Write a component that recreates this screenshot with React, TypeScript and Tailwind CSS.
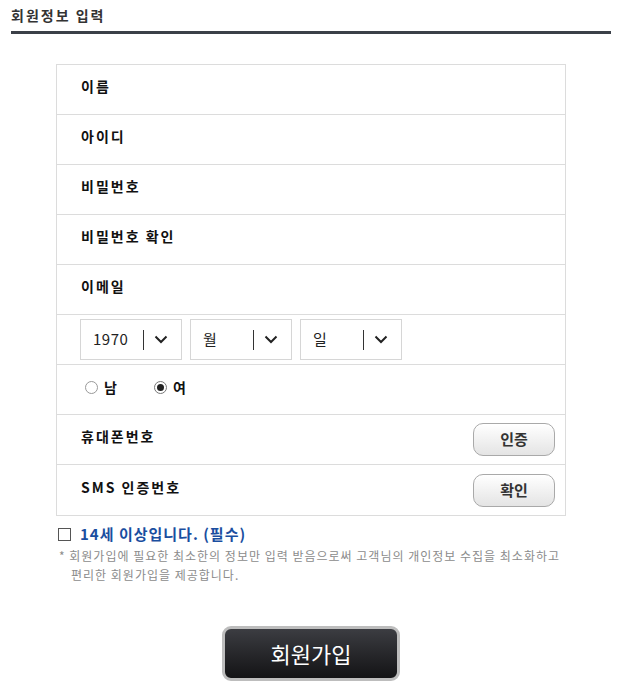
import React from 'react'

const font = { fontFamily: '"Noto Sans CJK KR", "Noto Sans", sans-serif' }

function Row({ children, last }: { children: React.ReactNode; last?: boolean }) {
  return (
    <div className={`h-[50px] flex items-center ${last ? '' : 'border-b border-[#dcdcdc]'}`}>
      {children}
    </div>
  )
}

function Label({ text }: { text: string }) {
  return <span className="pl-6 pb-[6px] text-[14px] font-bold text-[#111] tracking-[2px]">{text}</span>
}

function Chevron() {
  return (
    <svg width="14" height="9" viewBox="0 0 14 9" fill="none">
      <path d="M1.5 1.5 L7 7 L12.5 1.5" stroke="#222" strokeWidth="2" />
    </svg>
  )
}

function DateSelect({ value }: { value: string }) {
  return (
    <div className="w-[102px] h-[41px] border border-[#d6d6d6] flex items-center">
      <span className="w-[62px] pl-3 text-[15px] text-[#222] tracking-[0.5px]">{value}</span>
      <span className="w-px h-[20px] bg-[#333]" />
      <span className="flex-1 flex justify-center pr-1">
        <Chevron />
      </span>
    </div>
  )
}

function SmallButton({ text }: { text: string }) {
  return (
    <button className="mr-[10px] w-[82px] h-[33px] rounded-[10px] border border-[#a9a9a9] bg-gradient-to-b from-white to-[#e4e4e4] text-[15px] font-bold text-[#333] shadow-[inset_0_1px_0_#fff]">
      {text}
    </button>
  )
}

export default function App() {
  return (
    <div className="bg-white min-h-[694px] pl-[11px] pt-[5px]" style={font}>
      <div className="w-[600px]">
        <h2 className="text-[14px] font-bold text-[#333] leading-[20px] tracking-[2px]">회원정보 입력</h2>
        <div className="mt-[6px] h-[3px] bg-[#3b4048]" />

        <div className="mt-[30px] mx-auto w-[510px] border border-[#dcdcdc]">
          <Row><Label text="이름" /></Row>
          <Row><Label text="아이디" /></Row>
          <Row><Label text="비밀번호" /></Row>
          <Row><Label text="비밀번호 확인" /></Row>
          <Row><Label text="이메일" /></Row>
          <Row>
            <div className="pl-[23px] flex gap-2">
              <DateSelect value="1970" />
              <DateSelect value="월" />
              <DateSelect value="일" />
            </div>
          </Row>
          <Row>
            <div className="pl-[28px] pb-[5px] flex items-center text-[14px] font-bold text-[#111]">
              <span className="w-[13px] h-[13px] rounded-full border border-[#999] bg-white" />
              <span className="ml-[6px]">남</span>
              <span className="ml-[37px] w-[13px] h-[13px] rounded-full border border-[#777] bg-white flex items-center justify-center">
                <span className="w-[7px] h-[7px] rounded-full bg-[#222]" />
              </span>
              <span className="ml-[6px]">여</span>
            </div>
          </Row>
          <Row>
            <div className="w-full flex items-center justify-between">
              <Label text="휴대폰번호" />
              <SmallButton text="인증" />
            </div>
          </Row>
          <Row last>
            <div className="w-full flex items-center justify-between">
              <Label text="SMS 인증번호" />
              <SmallButton text="확인" />
            </div>
          </Row>
        </div>

        <div className="ml-[47px] mt-[7px] flex items-center">
          <span className="w-[13px] h-[13px] border border-[#555] bg-white" />
          <span className="ml-[9px] text-[15px] font-bold text-[#1a4ea0] tracking-[1px]">14세 이상입니다. (필수)</span>
        </div>
        <div className="ml-[48px] text-[12px] leading-[19px] text-[#8c8c8c] tracking-[1px]">
          <p>* 회원가입에 필요한 최소한의 정보만 입력 받음으로써 고객님의 개인정보 수집을 최소화하고</p>
          <p className="pl-3">편리한 회원가입을 제공합니다.</p>
        </div>

        <div className="mt-[42px] flex justify-center">
          <button className="w-[178px] h-[55px] rounded-[9px] border-[3px] border-[#bdbdbd] bg-gradient-to-b from-[#3c3d42] to-[#141416] text-white text-[22px]">
            회원가입
          </button>
        </div>
      </div>
    </div>
  )
}
